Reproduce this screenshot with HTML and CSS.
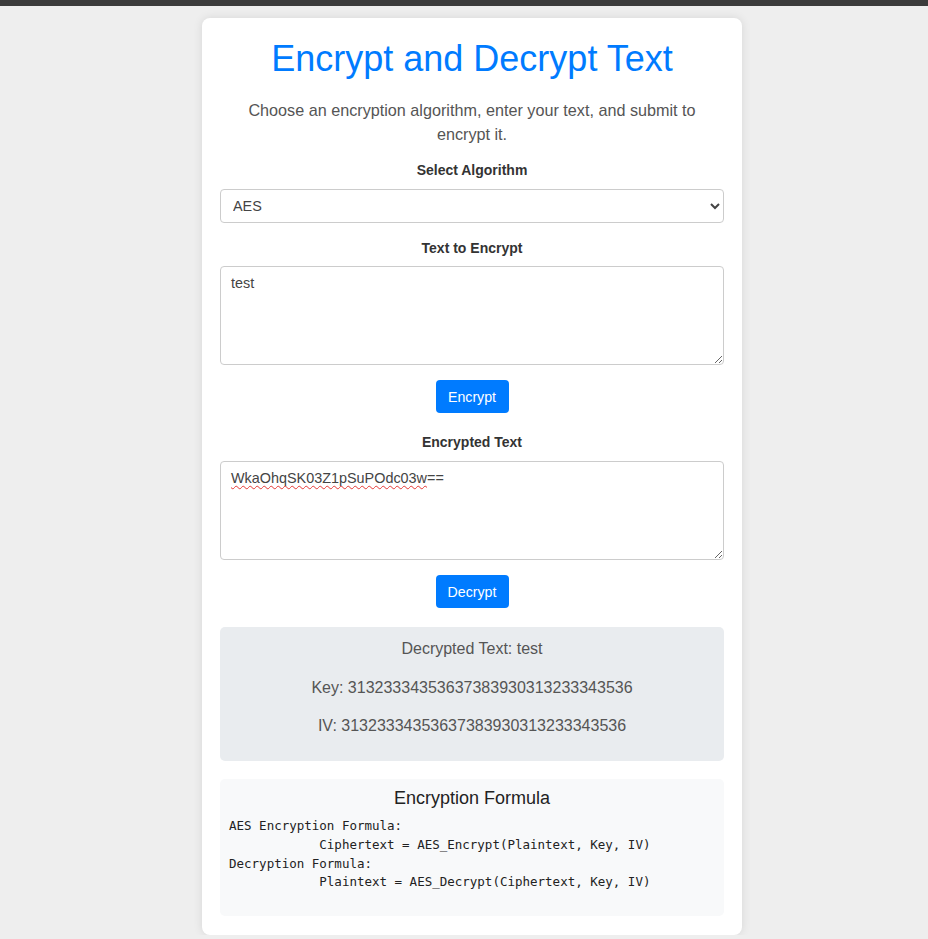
FILE: index.html
```html
<!DOCTYPE html>
<html lang="en">
<head>
<meta charset="utf-8">
<title>Encrypt and Decrypt Text</title>
<link rel="stylesheet" href="styles.css">
</head>
<body>
<header class="topbar"></header>
<main class="page">
  <section class="card">
    <h1 class="title">Encrypt and Decrypt Text</h1>
    <p class="intro">Choose an encryption algorithm, enter your text, and submit to encrypt it.</p>

    <form class="form">
      <label class="label label-select" for="algo">Select Algorithm</label>
      <select id="algo" class="select">
        <option>AES</option>
        <option>DES</option>
        <option>RSA</option>
      </select>

      <label class="label" for="plain">Text to Encrypt</label>
      <textarea id="plain" class="textarea" spellcheck="false">test</textarea>
      <button type="button" class="btn">Encrypt</button>

      <label class="label label-enc">Encrypted Text</label>
      <div class="textarea textarea-div" role="textbox" contenteditable="true" spellcheck="false"><span class="misspelled">WkaOhqSK03Z1pSuPOdc03w</span>==</div>
      <button type="button" class="btn">Decrypt</button>
    </form>

    <div class="result">
      <p class="result-line">Decrypted Text: test</p>
      <p class="result-line">Key: 31323334353637383930313233343536</p>
      <p class="result-line">IV: 31323334353637383930313233343536</p>
    </div>

    <div class="formula">
      <h3 class="formula-title">Encryption Formula</h3>
<pre class="formula-code">AES Encryption Formula:
            Ciphertext = AES_Encrypt(Plaintext, Key, IV)
Decryption Formula:
            Plaintext = AES_Decrypt(Ciphertext, Key, IV)</pre>
    </div>
  </section>
</main>
</body>
</html>
```

FILE: styles.css
```css
html, body {
  margin: 0;
  padding: 0;
}

body {
  background: #eeeeee;
  font-family: "Liberation Sans", Arial, sans-serif;
  color: #333;
}

.topbar {
  height: 6px;
  background: #3b3b3b;
}

.page {
  display: flex;
  justify-content: center;
  padding: 12px 0 0 16px;
}

.card {
  box-sizing: border-box;
  width: 540px;
  background: #fff;
  border-radius: 8px;
  box-shadow: 0 0 10px rgba(0, 0, 0, 0.1);
  padding: 20px 18px 19px;
  display: flex;
  flex-direction: column;
}

.title {
  margin: 0 0 18px;
  font-size: 36px;
  line-height: 41px;
  font-weight: normal;
  color: #007bff;
  text-align: center;
}

.intro {
  margin: 0 0 16px;
  padding: 1px 16px 0;
  font-size: 16.2px;
  line-height: 24px;
  color: #555;
  text-align: center;
}

.form {
  display: flex;
  flex-direction: column;
}

.label {
  display: block;
  font-size: 14px;
  line-height: 16px;
  font-weight: bold;
  color: #333;
  text-align: center;
  margin-bottom: 10px;
}

.label-select {
  margin-bottom: 11px;
}

.label-enc {
  margin-bottom: 11px;
}

.select {
  box-sizing: border-box;
  width: 100%;
  height: 34px;
  padding: 0 8px;
  border: 1px solid #ccc;
  border-radius: 4px;
  background: #fff;
  font-family: "Liberation Sans", Arial, sans-serif;
  font-size: 14.4px;
  color: #444;
  margin-bottom: 17px;
}

.textarea {
  box-sizing: border-box;
  display: block;
  width: 100%;
  height: 99px;
  padding: 8px 10px;
  border: 1px solid #ccc;
  border-radius: 4px;
  background: #fff;
  font-family: "Liberation Sans", Arial, sans-serif;
  font-size: 14.4px;
  line-height: normal;
  color: #444;
  resize: vertical;
  margin: 0;
}

.textarea-div {
  overflow: auto;
  outline: none;
  white-space: pre-wrap;
}

.misspelled {
  text-decoration: underline wavy #e53935;
  text-decoration-skip-ink: none;
  text-underline-offset: 2px;
  text-decoration-thickness: 1px;
}

.btn {
  align-self: center;
  width: 73px;
  height: 33px;
  padding: 0;
  margin: 15px 0 21px;
  border: none;
  border-radius: 4px;
  background: #007bff;
  color: #fff;
  font-family: "Liberation Sans", Arial, sans-serif;
  font-size: 14.2px;
  cursor: pointer;
}

.form .btn:last-child {
  margin-bottom: 19px;
}

.result {
  background: #e9ecef;
  border-radius: 5px;
  padding: 13px 15px 26px;
  margin-bottom: 18px;
  text-align: center;
}

.result-line {
  margin: 0 0 20.7px;
  font-size: 16px;
  line-height: 18px;
  color: #555;
}

.result-line:last-child {
  margin-bottom: 0;
}

.formula {
  background: #f8f9fa;
  border-radius: 5px;
  padding: 9px 9px 24px;
}

.formula-title {
  margin: 0 0 8px;
  font-size: 18px;
  line-height: 21px;
  font-weight: normal;
  color: #222;
  text-align: center;
}

.formula-code {
  margin: 0;
  font-family: "DejaVu Sans Mono", monospace;
  font-size: 12.5px;
  line-height: 18.7px;
  color: #222;
}
```
